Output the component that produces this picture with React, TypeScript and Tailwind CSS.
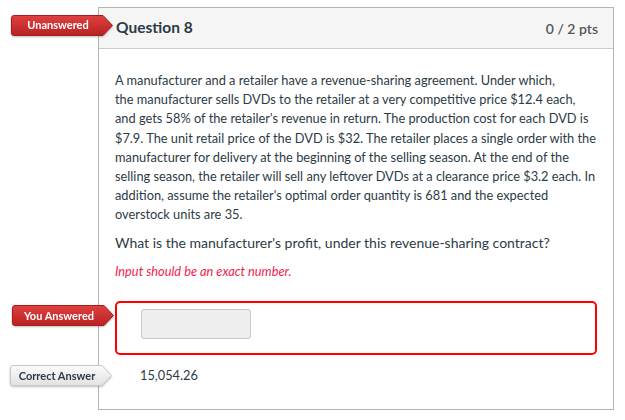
import React from 'react'

type BadgeProps = {
  label: string
  tone: 'red' | 'gray'
}

function Badge({ label, tone }: BadgeProps) {
  const id = `grad-${tone}`
  const red = tone === 'red'
  return (
    <div className="relative w-[102px] h-[21px] drop-shadow-[0_1px_1px_rgba(0,0,0,0.25)]">
      <svg width="102" height="21" viewBox="0 0 102 21" className="absolute inset-0">
        <defs>
          <linearGradient id={id} x1="0" y1="0" x2="0" y2="1">
            <stop offset="0" stopColor={red ? '#e04040' : '#fbfbfb'} />
            <stop offset="1" stopColor={red ? '#b82222' : '#e2e2e2'} />
          </linearGradient>
        </defs>
        <path
          d="M3 0.5 H92 L101.5 10.5 L92 20.5 H3 Q0.5 20.5 0.5 18 V3 Q0.5 0.5 3 0.5 Z"
          fill={`url(#${id})`}
          stroke={red ? '#a81c1c' : '#c8c8c8'}
          strokeWidth="1"
        />
      </svg>
      <span
        className={`relative flex h-full w-[94px] items-center justify-center text-[11px] font-bold ${
          red ? 'text-white' : 'text-[#2d3b45]'
        }`}
      >
        {label}
      </span>
    </div>
  )
}

export default function App() {
  return (
    <div
      className="relative w-[625px] h-[420px] bg-white pt-[7px] pl-[98px] text-[#2d3b45]"
      style={{ fontFamily: 'Lato, "Open Sans", sans-serif' }}
    >
      <div className="w-[516px] border border-[#b5b5b5]">
        {/* Header */}
        <div className="relative flex h-[41px] items-center justify-between border-b border-[#c7cdd1] bg-[#f5f5f5] pl-[17px] pr-[15px]">
          <div className="absolute left-[-88px] top-[7px]">
            <Badge label="Unanswered" tone="red" />
          </div>
          <h2 className="text-[15.5px] font-bold">Question 8</h2>
          <span className="text-[14px] font-semibold text-[#555555]">0 / 2 pts</span>
        </div>

        {/* Body */}
        <div className="px-[16px] pt-[22px] pb-[22px] text-[12.8px] leading-[19.2px]">
          <p>
            A manufacturer and a retailer have a revenue-sharing agreement. Under which,
            <br />
            the manufacturer sells DVDs to the retailer at a very competitive price $12.4 each,
            and gets 58% of the retailer's revenue in return. The production cost for each DVD is
            $7.9. The unit retail price of the DVD is $32. The retailer places a single order with the
            manufacturer for delivery at the beginning of the selling season. At the end of the
            selling season, the retailer will sell any leftover DVDs at a clearance price $3.2 each. In
            addition, assume the retailer's optimal order quantity is 681 and the expected
            overstock units are 35.
          </p>
          <p className="mt-[8px] text-[14px]">
            What is the manufacturer's profit, under this revenue-sharing contract?
          </p>
          <p className="mt-[10px] italic text-[12.8px] text-[#ee1e4e]">Input should be an exact number.</p>

          {/* You answered */}
          <div className="relative mt-[20px]">
            <div className="absolute left-[-103px] top-[4px]">
              <Badge label="You Answered" tone="red" />
            </div>
            <div className="h-[54px] rounded-[5px] border-2 border-[#ff0000] pl-[24px] pt-[6px]">
              <div className="h-[30px] w-[110px] rounded-[3px] border border-[#c8c8c8] bg-[#eeeeee]" />
            </div>
          </div>

          {/* Correct answer */}
          <div className="relative mt-[10px] flex h-[22px] items-center">
            <div className="absolute left-[-105px] top-0">
              <Badge label="Correct Answer" tone="gray" />
            </div>
            <span className="pl-[25px]">15,054.26</span>
          </div>
        </div>
      </div>
    </div>
  )
}
